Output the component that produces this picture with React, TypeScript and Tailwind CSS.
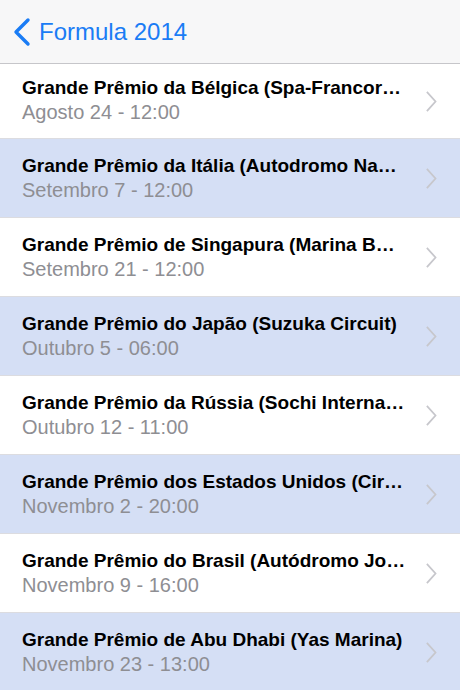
import React from "react";

const rows = [
  { t: "Grande Prêmio da Bélgica (Spa-Francor…", d: "Agosto 24 - 12:00" },
  { t: "Grande Prêmio da Itália (Autodromo Na…", d: "Setembro 7 - 12:00" },
  { t: "Grande Prêmio de Singapura (Marina B…", d: "Setembro 21 - 12:00" },
  { t: "Grande Prêmio do Japão (Suzuka Circuit)", d: "Outubro 5 - 06:00" },
  { t: "Grande Prêmio da Rússia (Sochi Interna…", d: "Outubro 12 - 11:00" },
  { t: "Grande Prêmio dos Estados Unidos (Cir…", d: "Novembro 2 - 20:00" },
  { t: "Grande Prêmio do Brasil (Autódromo Jo…", d: "Novembro 9 - 16:00" },
  { t: "Grande Prêmio de Abu Dhabi (Yas Marina)", d: "Novembro 23 - 13:00" },
];

function Chevron() {
  return (
    <svg width="11" height="21" viewBox="0 0 11 21" className="shrink-0">
      <path d="M1.5 1.5 L9.5 10.5 L1.5 19.5" fill="none" stroke="#c7c7cc" strokeWidth="1.8" strokeLinecap="square" />
    </svg>
  );
}

export default function App() {
  return (
    <div className="w-[460px] h-[690px] overflow-hidden bg-white" style={{ fontFamily: '"Liberation Sans", Arial, sans-serif' }}>
      <div className="h-[64px] bg-[#f7f7f8] border-b border-[#c6c6ca] flex items-center pl-[11px]">
        <svg width="22" height="32" viewBox="0 0 22 32" className="mr-[6px] mt-[1px]">
          <path d="M17 4 L5 16 L17 28" fill="none" stroke="#1a7cf5" strokeWidth="3.4" strokeLinecap="round" strokeLinejoin="round" />
        </svg>
        <span className="text-[#1a7cf5] text-[24px] leading-none mt-[1px]">Formula 2014</span>
      </div>
      <div className="flex flex-col">
        {rows.map((r, i) => (
          <div
            key={i}
            className={`${i === 0 ? "h-[75px]" : "h-[79px]"} ${i % 2 === 1 ? "bg-[#d5dff5]" : "bg-white"} border-b border-[#dcdce0] flex items-center pl-[22px] pr-[23px] shrink-0`}
          >
            <div className={`flex-1 min-w-0 flex flex-col ${i === 0 ? "mt-[-3px]" : ""}`}>
              <div className="text-[19px] font-bold text-black whitespace-nowrap leading-[24px]">{r.t}</div>
              <div className="text-[20px] text-[#8e8e93] leading-[24px]">{r.d}</div>
            </div>
            <Chevron />
          </div>
        ))}
      </div>
    </div>
  );
}
